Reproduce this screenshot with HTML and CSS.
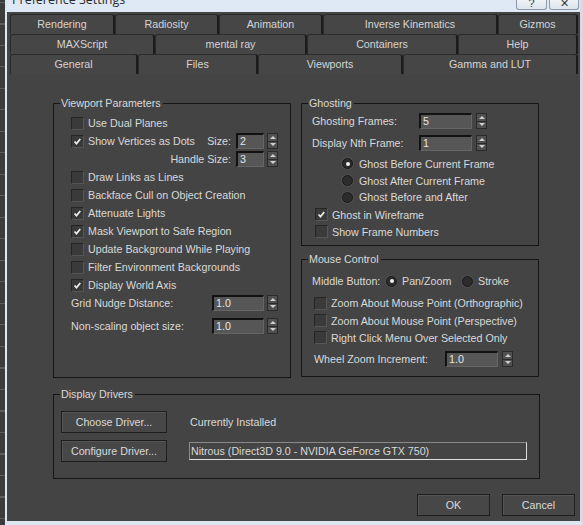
FILE: index.html
```html
<!DOCTYPE html>
<html>
<head>
<meta charset="utf-8">
<link rel="stylesheet" href="styles.css">
</head>
<body>
<div class="desk"></div>
<div class="window">
  <div class="titlebar">
    <span class="title">Preference Settings</span>
    <div class="tb-btns">
      <span class="tbb help">?</span>
      <span class="tbb close">✕</span>
    </div>
  </div>
  <div class="main">
    <div class="tabs">
      <div class="tabrow r1">
        <div class="tab">Rendering</div>
        <div class="tab">Radiosity</div>
        <div class="tab">Animation</div>
        <div class="tab">Inverse Kinematics</div>
        <div class="tab">Gizmos</div>
      </div>
      <div class="tabrow r2">
        <div class="tab">MAXScript</div>
        <div class="tab">mental ray</div>
        <div class="tab">Containers</div>
        <div class="tab">Help</div>
      </div>
      <div class="tabrow r3">
        <div class="tab">General</div>
        <div class="tab">Files</div>
        <div class="tab active">Viewports</div>
        <div class="tab">Gamma and LUT</div>
      </div>
    </div>

    <div class="page">
      <div class="cols">
        <div class="group vp">
          <span class="legend">Viewport Parameters</span>
          <div class="row"><span class="cb"></span><span>Use Dual Planes</span></div>
          <div class="row">
            <span class="cb on"><svg viewBox="0 0 13 13"><path d="M3 6.5 L5.3 9 L9.8 3.5"/></svg></span><span>Show Vertices as Dots</span>
            <span class="push">Size:</span><span class="num short">2</span><span class="spin"><i></i><i class="dn"></i></span>
          </div>
          <div class="row end">
            <span>Handle Size:</span><span class="num short">3</span><span class="spin"><i></i><i class="dn"></i></span>
          </div>
          <div class="row"><span class="cb"></span><span>Draw Links as Lines</span></div>
          <div class="row"><span class="cb"></span><span>Backface Cull on Object Creation</span></div>
          <div class="row"><span class="cb on"><svg viewBox="0 0 13 13"><path d="M3 6.5 L5.3 9 L9.8 3.5"/></svg></span><span>Attenuate Lights</span></div>
          <div class="row"><span class="cb on"><svg viewBox="0 0 13 13"><path d="M3 6.5 L5.3 9 L9.8 3.5"/></svg></span><span>Mask Viewport to Safe Region</span></div>
          <div class="row"><span class="cb"></span><span>Update Background While Playing</span></div>
          <div class="row"><span class="cb"></span><span>Filter Environment Backgrounds</span></div>
          <div class="row"><span class="cb on"><svg viewBox="0 0 13 13"><path d="M3 6.5 L5.3 9 L9.8 3.5"/></svg></span><span>Display World Axis</span></div>
          <div class="row">
            <span>Grid Nudge Distance:</span><span class="num wide push">1.0</span><span class="spin"><i></i><i class="dn"></i></span>
          </div>
          <div class="row gap5">
            <span>Non-scaling object size:</span><span class="num wide push">1.0</span><span class="spin"><i></i><i class="dn"></i></span>
          </div>
        </div>

        <div class="rightcol">
          <div class="group ghost">
            <span class="legend">Ghosting</span>
            <div class="row"><span class="lbl107">Ghosting Frames:</span><span class="num mid">5</span><span class="spin"><i></i><i class="dn"></i></span></div>
            <div class="row gap4"><span class="lbl107">Display Nth Frame:</span><span class="num mid">1</span><span class="spin"><i></i><i class="dn"></i></span></div>
            <div class="row r17 radio-row first"><span class="rb on"></span><span>Ghost Before Current Frame</span></div>
            <div class="row r17 radio-row"><span class="rb"></span><span>Ghost After Current Frame</span></div>
            <div class="row r16 radio-row"><span class="rb"></span><span>Ghost Before and After</span></div>
            <div class="row r17 ind3 gap1"><span class="cb on"><svg viewBox="0 0 13 13"><path d="M3 6.5 L5.3 9 L9.8 3.5"/></svg></span><span>Ghost in Wireframe</span></div>
            <div class="row r17 ind3"><span class="cb"></span><span>Show Frame Numbers</span></div>
          </div>

          <div class="group mouse">
            <span class="legend">Mouse Control</span>
            <div class="row">
              <span class="lbl74">Middle Button:</span>
              <span class="ropt"><span class="rb on"></span><span>Pan/Zoom</span></span>
              <span class="ropt2"><span class="rb"></span><span>Stroke</span></span>
            </div>
            <div class="row gap4 ind2"><span class="cb"></span><span>Zoom About Mouse Point (Orthographic)</span></div>
            <div class="row r17 ind2"><span class="cb"></span><span>Zoom About Mouse Point (Perspective)</span></div>
            <div class="row r17 ind2"><span class="cb"></span><span>Right Click Menu Over Selected Only</span></div>
            <div class="row gap4 ind2"><span class="lbl133">Wheel Zoom Increment:</span><span class="num mid">1.0</span><span class="spin"><i></i><i class="dn"></i></span></div>
          </div>
        </div>
      </div>

      <div class="group drivers">
        <span class="legend">Display Drivers</span>
        <div class="drv-grid">
          <button class="btn drv">Choose Driver...</button>
          <span class="cur">Currently Installed</span>
          <button class="btn drv">Configure Driver...</button>
          <span class="field">Nitrous (Direct3D 9.0 - NVIDIA GeForce GTX 750)</span>
        </div>
      </div>
    </div>

    <div class="footer">
      <button class="btn dlg">OK</button>
      <button class="btn dlg">Cancel</button>
    </div>
  </div>
</div>
</body>
</html>
```

FILE: styles.css
```css
html, body {
  margin: 0;
  padding: 0;
}
body {
  width: 583px;
  height: 525px;
  overflow: hidden;
  display: flex;
  background: #3b3b3b;
  font-family: "Liberation Sans", Arial, sans-serif;
  font-size: 10.7px;
  color: #d9d9d9;
}
.desk {
  width: 5px;
  flex: none;
  background: repeating-linear-gradient(to bottom, transparent 0, transparent 2px, #5e5e5e 2px, #5e5e5e 3px, transparent 3px, transparent 21.5px) #3c3c3c;
}
.window {
  flex: 1;
  display: flex;
  flex-direction: column;
  background: #444444;
  border-left: 2px solid #dde7f3;
  border-right: 3px solid #d3dbe5;
  border-bottom: 4px solid #dde7f3;
  min-width: 0;
}
.titlebar {
  height: 12px;
  flex: none;
  display: flex;
  overflow: hidden;
  background: #dfe9f5;
}
.title {
  margin: -8px 0 0 5px;
  font-family: "Open Sans", "Liberation Sans", sans-serif;
  font-size: 12.5px;
  line-height: 16px;
  color: #2a2a2a;
  white-space: nowrap;
}
.tb-btns {
  margin-left: auto;
  display: flex;
  gap: 2px;
  margin-right: 1px;
  height: 10px;
}
.tbb {
  box-sizing: border-box;
  height: 10px;
  border: 1px solid #8d9aab;
  border-top: none;
  border-radius: 0 0 3px 3px;
  background: linear-gradient(#eef2f7, #dbe3ec);
  color: #3a3a3a;
  text-align: center;
  font-size: 11px;
  line-height: 6px;
  overflow: hidden;
}
.help { width: 31px; }
.close { width: 30px; }

.main {
  flex: 1;
  display: flex;
  flex-direction: column;
  padding: 2px 2px 0 3px;
}
.tabrow {
  display: grid;
  height: 20px;
}
.r1 { grid-template-columns: 105px 104px 104px 175px 80px; }
.r2 { grid-template-columns: 145px 152px 151px 120px; }
.r3 { grid-template-columns: 128px 120px 145px 175px; }
.tab {
  box-sizing: border-box;
  height: 20px;
  border: 1px solid #2b2b2b;
  border-right: 2px solid #1b1b1b;
  border-bottom: none;
  border-radius: 3px 3px 0 0;
  background: #464646;
  color: #d4d4d4;
  text-align: center;
  line-height: 19px;
  white-space: nowrap;
}

.page {
  padding: 29px 0 0 43px;
}
.cols {
  display: flex;
  gap: 10px;
}
.group {
  position: relative;
  box-sizing: border-box;
  border: 1px solid #161616;
}
.legend {
  position: absolute;
  top: -7px;
  left: 6px;
  padding: 0 2px 0 1px;
  background: #444444;
  line-height: 13px;
  white-space: nowrap;
}
.row {
  display: flex;
  align-items: center;
  height: 18px;
  white-space: nowrap;
}
.row.r17 { height: 17px; }
.row.r16 { height: 16px; }
.row.end { justify-content: flex-end; }
.row.gap5 { margin-top: 5px; }
.row.gap4 { margin-top: 4px; }
.row.gap1 { margin-top: 1px; }
.push { margin-left: auto; }

.vp {
  width: 238px;
  height: 275px;
  padding: 10px 12px 0 17px;
}
.vp .row > .push:not(.num) { margin-right: 5px; }
.end > span:first-child { margin-right: 5px; }

.cb {
  flex: none;
  box-sizing: border-box;
  width: 13px;
  height: 13px;
  margin-right: 4px;
  background: #3a3a3a;
  border: 1px solid #252525;
  border-right-color: #565656;
  border-bottom-color: #565656;
  display: flex;
}
.cb svg {
  width: 11px;
  height: 11px;
  margin: 0;
}
.cb path {
  fill: none;
  stroke: #ececec;
  stroke-width: 2;
}
.rb {
  flex: none;
  box-sizing: border-box;
  width: 11px;
  height: 11px;
  border-radius: 50%;
  background: #2c2c2c;
  border: 1px solid #1a1a1a;
  box-shadow: 0 0 0 1px #4e4e4e;
  display: flex;
  align-items: center;
  justify-content: center;
}
.rb.on::before {
  content: "";
  width: 4px;
  height: 4px;
  border-radius: 50%;
  background: #f0f0f0;
}

.num {
  flex: none;
  box-sizing: border-box;
  height: 16px;
  background: #565656;
  border-top: 2px solid #121212;
  border-left: 2px solid #121212;
  border-right: 1px solid #666;
  border-bottom: 1px solid #666;
  padding-left: 2px;
  line-height: 13px;
  color: #e6e6e6;
  margin-right: 3px;
}
.num.short { width: 28px; }
.num.wide { width: 52px; }
.num.mid { width: 53px; margin-right: 4px; }

.spin {
  flex: none;
  box-sizing: border-box;
  width: 11px;
  height: 16px;
  border: 1px solid #2a2a2a;
  background: #505050;
  display: flex;
  flex-direction: column;
}
.spin i {
  flex: 1;
  display: flex;
  align-items: center;
  justify-content: center;
}
.spin i + i {
  border-top: 1px solid #2a2a2a;
}
.spin i::before {
  content: "";
  border-left: 3px solid transparent;
  border-right: 3px solid transparent;
  border-bottom: 3px solid #cfcfcf;
}
.spin i.dn::before {
  border-bottom: 0;
  border-top: 3px solid #cfcfcf;
}

.rightcol {
  width: 238px;
  display: flex;
  flex-direction: column;
  gap: 13px;
}
.ghost {
  height: 143px;
  padding: 8px 0 0 10px;
}
.lbl107 { width: 107px; flex: none; }
.lbl74 { width: 74px; flex: none; }
.lbl133 { width: 131px; flex: none; }
.radio-row { padding-left: 30px; }
.radio-row.first { margin-top: 3px; }
.radio-row .rb { margin-right: 6px; }
.ind3 { padding-left: 3px; }
.ind2 { padding-left: 2px; }

.mouse {
  height: 118px;
  padding: 12px 0 0 10px;
}
.ropt {
  width: 76px;
  display: flex;
  align-items: center;
  flex: none;
}
.ropt2 {
  display: flex;
  align-items: center;
}
.ropt .rb, .ropt2 .rb { margin-right: 5px; }

.drivers {
  margin-top: 16px;
  width: 487px;
  height: 85px;
  padding: 16px 0 0 7px;
}
.drv-grid {
  display: grid;
  grid-template-columns: 106px 338px;
  grid-template-rows: 22px 22px;
  column-gap: 22px;
  row-gap: 7px;
  align-items: center;
}
.btn {
  box-sizing: border-box;
  margin: 0;
  padding: 0;
  background: #474747;
  border: 1px solid #1e1e1e;
  box-shadow: inset 1px 1px 0 #555;
  color: #d9d9d9;
  font-family: "Liberation Sans", Arial, sans-serif;
  font-size: 10.7px;
  height: 22px;
}
.drv { width: 106px; }
.cur { padding-left: 1px; }
.field {
  box-sizing: border-box;
  height: 18px;
  width: 338px;
  border: 1px solid #dcdcdc;
  border-top-color: #8a8a8a;
  border-left-color: #8a8a8a;
  padding-left: 1px;
  line-height: 16px;
  white-space: nowrap;
}

.footer {
  display: flex;
  justify-content: flex-end;
  gap: 12px;
  margin-top: 15px;
  padding-right: 3px;
}
.dlg { width: 73px; }
```
